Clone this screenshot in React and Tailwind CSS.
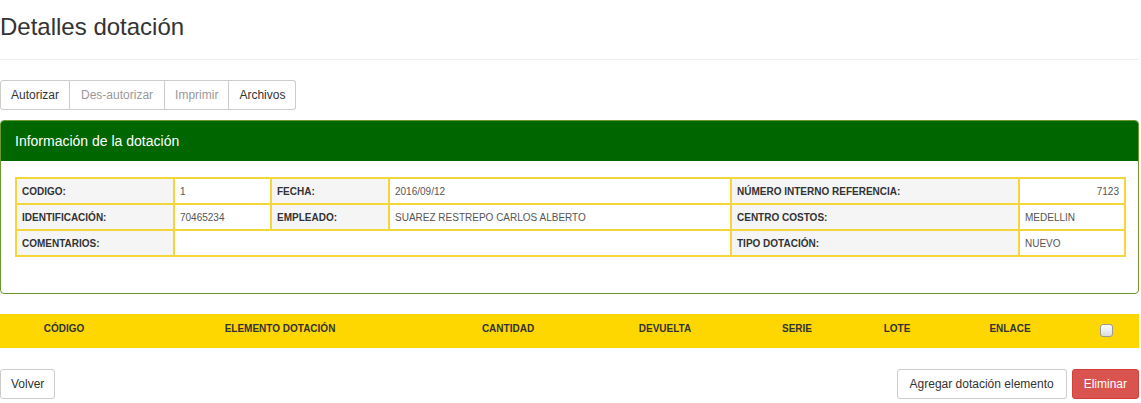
import React from "react";

const info = [
  [
    { label: "CODIGO:", value: "1" },
    { label: "FECHA:", value: "2016/09/12" },
    { label: "NÚMERO INTERNO REFERENCIA:", value: "7123", right: true },
  ],
  [
    { label: "IDENTIFICACIÓN:", value: "70465234" },
    { label: "EMPLEADO:", value: "SUAREZ RESTREPO CARLOS ALBERTO" },
    { label: "CENTRO COSTOS:", value: "MEDELLIN" },
  ],
];

const columns = ["CÓDIGO", "ELEMENTO DOTACIÓN", "CANTIDAD", "DEVUELTA", "SERIE", "LOTE", "ENLACE"];

const labelCell = "border-2 border-[#f3d73a] bg-[#f5f5f5] px-[5px] h-[26px] font-bold text-[#333]";
const valueCell = "border-2 border-[#f3d73a] bg-white px-[5px] h-[26px] text-[#555]";

const App = () => {
  return (
    <div className="w-[1139px] font-['Liberation_Sans',Arial,sans-serif] text-[#333]">
      <div className="h-[60px] border-b border-[#eee] pt-[13px]">
        <h1 className="text-[24px] leading-[28px] font-normal">Detalles dotación</h1>
      </div>

      <div className="mt-[20px] flex text-[12px]">
        <button className="h-[30px] px-[10px] border border-[#ccc] rounded-l-[3px] bg-white text-[#333]">
          Autorizar
        </button>
        <button className="h-[30px] px-[11px] border border-l-0 border-[#ccc] bg-white text-[#999]">
          Des-autorizar
        </button>
        <button className="h-[30px] px-[10px] border border-l-0 border-[#ccc] bg-white text-[#999]">
          Imprimir
        </button>
        <button className="h-[30px] px-[10px] border border-l-0 border-[#ccc] rounded-r-[3px] bg-white text-[#333]">
          Archivos
        </button>
      </div>

      <div className="mt-[10px] border border-[#6b9a2c] rounded-[4px] overflow-hidden">
        <div className="h-[40px] bg-[#006600] px-[14px] flex items-center text-white text-[14px]">
          Información de la dotación
        </div>
        <div className="pl-[14px] pr-[15px] pt-[16px] pb-[36px]">
          <table className="w-[1109px] table-fixed border-collapse text-[10px] border-2 border-[#f3d73a]">
            <colgroup>
              <col className="w-[158px]" />
              <col className="w-[97px]" />
              <col className="w-[118px]" />
              <col className="w-[342px]" />
              <col className="w-[288px]" />
              <col className="w-[106px]" />
            </colgroup>
            <tbody>
              {info.map((row, i) => (
                <tr key={i}>
                  {row.map((c) => (
                    <React.Fragment key={c.label}>
                      <td className={labelCell}>{c.label}</td>
                      <td className={valueCell + (c.right ? " text-right" : "")}>{c.value}</td>
                    </React.Fragment>
                  ))}
                </tr>
              ))}
              <tr>
                <td className={labelCell}>COMENTARIOS:</td>
                <td className={valueCell} colSpan={3}></td>
                <td className={labelCell}>TIPO DOTACIÓN:</td>
                <td className={valueCell}>NUEVO</td>
              </tr>
            </tbody>
          </table>
        </div>
      </div>

      <div className="mt-[20px] h-[34px] bg-[#ffd700] grid grid-cols-[128px_304px_152px_162px_102px_98px_128px_65px] text-[10px] font-bold text-[#333]">
        {columns.map((c) => (
          <div key={c} className="text-center pt-[8px] leading-[14px]">
            {c}
          </div>
        ))}
        <div className="flex justify-center pt-[10px]">
          <span className="w-[13px] h-[13px] rounded-[3px] border border-[#9a9a9a] bg-gradient-to-b from-white to-[#dcdcdc]" />
        </div>
      </div>

      <div className="mt-[21px] flex items-center text-[12px]">
        <button className="h-[30px] px-[10px] border border-[#ccc] rounded-[3px] bg-white text-[#333]">
          Volver
        </button>
        <div className="ml-auto flex gap-[5px]">
          <button className="h-[30px] px-[12px] border border-[#ccc] rounded-[3px] bg-white text-[#333]">
            Agregar dotación elemento
          </button>
          <button className="h-[30px] px-[11px] border border-[#d43f3a] rounded-[3px] bg-[#d9534f] text-white">
            Eliminar
          </button>
        </div>
      </div>
    </div>
  );
};

export default App;
